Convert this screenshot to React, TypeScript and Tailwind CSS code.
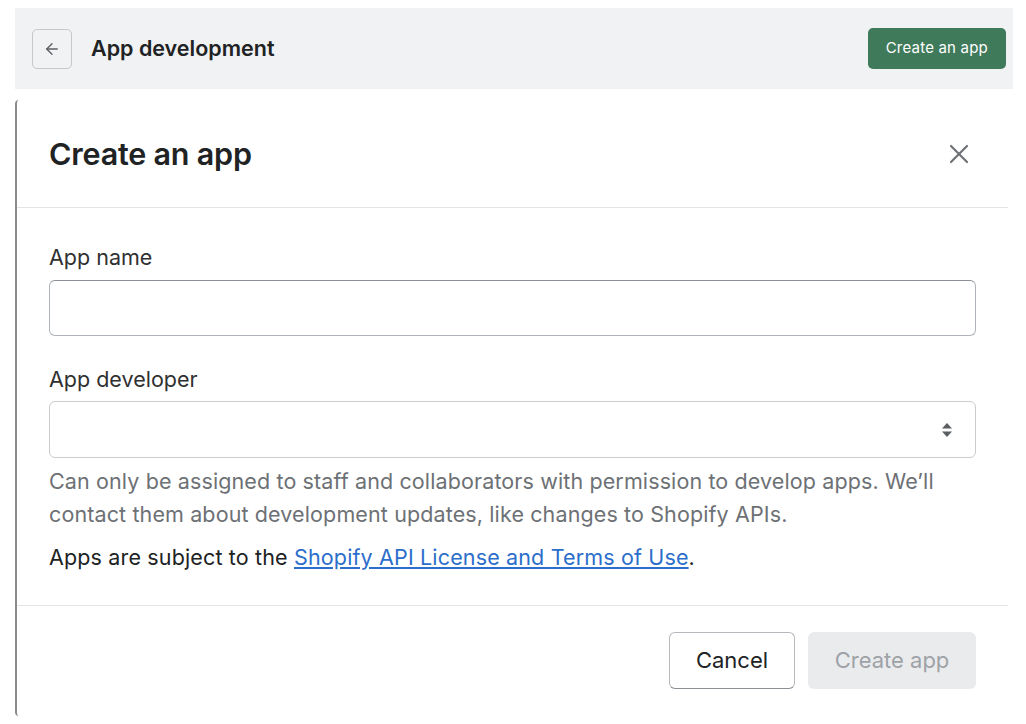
import { ArrowLeft, X } from "lucide-react"

const App = () => {
  return (
    <div className="w-[1026px] h-[724px] bg-white overflow-hidden font-['Inter',sans-serif] text-[#303030]">
      <div className="pt-2 px-[15px] pr-[13px]">
        <div className="h-[81px] bg-[#f1f2f4] flex items-center justify-between pl-[17px] pr-[7px]">
          <div className="flex items-center gap-[19px]">
            <button className="w-10 h-10 rounded-[5px] border border-[#c4c7cb] flex items-center justify-center text-[#5c5f62]">
              <ArrowLeft size={18} strokeWidth={1.8} />
            </button>
            <h1 className="text-[21.5px] font-semibold tracking-[0px] text-[#202223]">App development</h1>
          </div>
          <button className="h-[41px] px-[18px] rounded-[5px] bg-[#3f7a5b] text-white text-[15px] tracking-[0.2px]">
            Create an app
          </button>
        </div>
      </div>

      <div className="mt-[11px] ml-[15px] w-[993px] h-[616px] border-l-2 border-[#8a8a8a] rounded-tl-sm rounded-bl-sm flex flex-col">
        <div className="h-[108px] shrink-0 flex items-center justify-between pl-[32px] pr-[33px] border-b border-[#e3e4e6]">
          <h2 className="text-[30.5px] font-semibold tracking-[-0.2px] text-[#202223]">Create an app</h2>
          <X size={32} strokeWidth={1.6} className="text-[#6d7175]" />
        </div>

        <div className="pl-[32px] pr-[32px] pt-[36px] flex flex-col border-b border-[#e3e4e6] h-[398px] shrink-0">
          <label className="text-[21.5px] leading-[26px] text-[#303030]">App name</label>
          <div className="mt-[10px] w-[927px] h-[56px] rounded-[6px] border border-[#aeb4b9] border-t-[#898f94]"></div>

          <label className="mt-[30px] text-[21.5px] leading-[26px] text-[#303030]">App developer</label>
          <div className="mt-[9px] w-[927px] h-[57px] rounded-[6px] border border-[#c9cccf] flex items-center justify-end pr-[22px]">
            <svg width="12" height="18" viewBox="0 0 12 18" className="text-[#5c5f62]">
              <path d="M6 2 L11 7.5 H1 Z" fill="currentColor" />
              <path d="M6 16 L11 10.5 H1 Z" fill="currentColor" />
            </svg>
          </div>

          <p className="mt-[7px] text-[21.5px] leading-[33px] tracking-[0.12px] text-[#6d7175] w-[915px]">
            Can only be assigned to staff and collaborators with permission to develop apps. We’ll contact them about development updates, like changes to Shopify APIs.
          </p>
          <p className="mt-[10px] text-[21.5px] leading-[33px] tracking-[0.15px] text-[#202223]">
            Apps are subject to the{" "}
            <a className="text-[#2c6ecb] underline underline-offset-2">Shopify API License and Terms of Use</a>.
          </p>
        </div>

        <div className="flex-1 flex items-start justify-end pr-[32px] pt-[26px] gap-[13px]">
          <button className="h-[57px] w-[126px] rounded-[6px] border border-[#b5b9bd] border-b-[#8c9196] text-[22px] text-[#202223] bg-white">
            Cancel
          </button>
          <button className="h-[57px] w-[168px] rounded-[6px] bg-[#eaebed] text-[22px] text-[#9ea2a7]">
            Create app
          </button>
        </div>
      </div>
    </div>
  )
}

export default App
